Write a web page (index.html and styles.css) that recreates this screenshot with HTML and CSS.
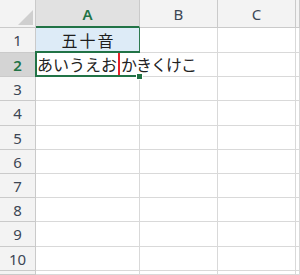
FILE: index.html
```html
<!DOCTYPE html>
<html>
<head>
<meta charset="utf-8">
<link rel="stylesheet" href="styles.css">
</head>
<body>

<div class="sheet">

<div class="hd corner"><svg width="36" height="28"><polygon points="33,10 33,25 18,25" fill="#cfcfcf"/></svg></div>
<div class="hd col on">A</div>
<div class="hd col">B</div>
<div class="hd col">C</div>
<div class="hd col"></div>

<div class="rh">1</div>
<div class="cell title">五十音</div>
<div class="cell"></div>
<div class="cell"></div>
<div class="cell"></div>

<div class="rh on">2</div>
<div class="cell active">
    <div class="sel"></div>
    <div class="editor"><span>あいうえお</span><span class="caret"></span><span class="rest">かきくけこ</span></div>
    <div class="handle"></div>
</div>
<div class="cell"></div>
<div class="cell"></div>
<div class="cell"></div>

<div class="rh">3</div><div class="cell"></div><div class="cell"></div><div class="cell"></div><div class="cell"></div>
<div class="rh">4</div><div class="cell"></div><div class="cell"></div><div class="cell"></div><div class="cell"></div>
<div class="rh">5</div><div class="cell"></div><div class="cell"></div><div class="cell"></div><div class="cell"></div>
<div class="rh">6</div><div class="cell"></div><div class="cell"></div><div class="cell"></div><div class="cell"></div>
<div class="rh">7</div><div class="cell"></div><div class="cell"></div><div class="cell"></div><div class="cell"></div>
<div class="rh">8</div><div class="cell"></div><div class="cell"></div><div class="cell"></div><div class="cell"></div>
<div class="rh">9</div><div class="cell"></div><div class="cell"></div><div class="cell"></div><div class="cell"></div>
<div class="rh">10</div><div class="cell"></div><div class="cell"></div><div class="cell"></div><div class="cell"></div>
<div class="rh"></div><div class="cell"></div><div class="cell"></div><div class="cell"></div><div class="cell"></div>

</div>

</body>
</html>
```

FILE: styles.css
```css
body {
    margin: 0;
    background: #fff;
    font: 15px "Noto Sans", "Noto Sans CJK JP", sans-serif;
    overflow: hidden;
}

div.sheet {
    display: grid;
    grid-template-columns: 36px 104px 78px 78px 1fr;
    grid-template-rows: 28px 25px 24px 24px 25px 24px 24px 24px 24px 25px 24px 1fr;
    width: 300px;
    height: 275px;
}

div.sheet > div {
    box-sizing: border-box;
    border-right: 1px solid #d9d9d9;
    border-bottom: 1px solid #d9d9d9;
}

div.hd {
    background: #f3f3f3;
    border-color: #cacaca !important;
    color: #3c4654;
    display: flex;
    align-items: center;
    justify-content: center;
    padding-top: 1px;
}

div.hd.on {
    background: #e1e1e1;
    color: #217346;
    font-weight: 600;
    border-bottom: 2px solid #217346 !important;
}

div.corner {
    padding: 0;
}

div.rh {
    background: #f3f3f3;
    border-color: #cacaca !important;
    color: #3c4654;
    display: flex;
    align-items: center;
    justify-content: center;
}

div.rh.on {
    background: #d4d4d4;
    color: #217346;
    font-weight: 600;
}

div.cell {
    position: relative;
}

div.title {
    background: #ddebf7;
    border-right: 1px solid #2f7a50 !important;
    border-bottom: none !important;
    font: 16px "Noto Sans CJK JP", sans-serif;
    letter-spacing: 2px;
    color: #1e1e1e;
    text-align: center;
    line-height: 24px;
    padding-left: 2px;
}

div.active {
    border: none !important;
}

div.sel {
    position: absolute;
    left: -1px;
    top: -2px;
    width: 105px;
    height: 26px;
    box-sizing: border-box;
    border: 2px solid #217346;
    border-right: none;
    z-index: 3;
}

div.editor {
    position: absolute;
    left: 1px;
    top: 0;
    height: 23px;
    background: #fff;
    z-index: 2;
    white-space: nowrap;
    font: 16px "Noto Sans CJK JP", sans-serif;
    color: #222;
    line-height: 23px;
    padding: 0 4px 0 0;
}

span.caret {
    display: inline-block;
    width: 2px;
    height: 23px;
    background: #e8202a;
    vertical-align: top;
    margin: 0 1px;
}

span.rest {
    letter-spacing: -1px;
}

div.handle {
    position: absolute;
    right: -3px;
    bottom: -3px;
    width: 5px;
    height: 5px;
    background: #217346;
    border: 1px solid #fff;
    z-index: 4;
}
```
